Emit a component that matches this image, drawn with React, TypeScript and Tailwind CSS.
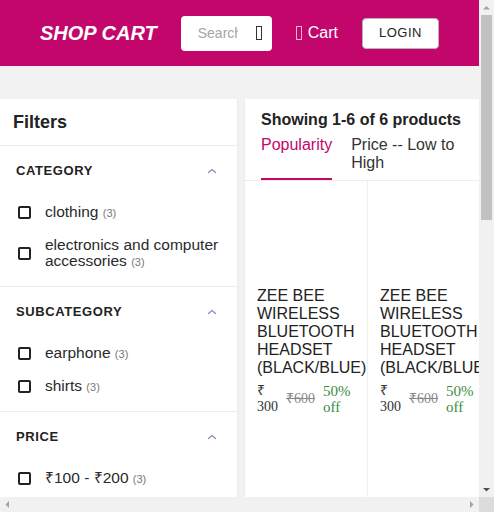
import { useState } from 'react';

interface FilterItem {
  label: string;
  count: number;
}

interface FilterGroup {
  id: string;
  title: string;
  items: FilterItem[];
}

const filterGroups: FilterGroup[] = [
  {
    id: 'category',
    title: 'Category',
    items: [
      { label: 'clothing', count: 3 },
      { label: 'electronics and computer accessories', count: 3 },
    ],
  },
  {
    id: 'subcategory',
    title: 'Subcategory',
    items: [
      { label: 'earphone', count: 3 },
      { label: 'shirts', count: 3 },
    ],
  },
  {
    id: 'price',
    title: 'Price',
    items: [
      { label: '₹100 - ₹200', count: 3 },
      { label: '₹300 - ₹400', count: 3 },
    ],
  },
];

const products = [
  { id: 1, name: 'ZEE BEE WIRELESS BLUETOOTH HEADSET (BLACK/BLUE)', price: 300, mrp: 600, off: 50 },
  { id: 2, name: 'ZEE BEE WIRELESS BLUETOOTH HEADSET (BLACK/BLUE)', price: 300, mrp: 600, off: 50 },
  { id: 3, name: 'ZEE BEE WIRELESS BLUETOOTH HEADSET (BLACK/BLUE)', price: 300, mrp: 600, off: 50 },
];

function ChevronUp() {
  return (
    <svg className="w-[12px] h-[12px] text-[#8a8cb2]" viewBox="0 0 12 12" fill="none" stroke="currentColor">
      <path d="M2.5 7.5L6 4.5l3.5 3" strokeWidth={1.2} strokeLinecap="round" strokeLinejoin="round" />
    </svg>
  );
}

// stand-in for the icon font glyph that never loaded
function Tofu({ className }: { className: string }) {
  return <span className={`inline-block w-[6px] h-[14px] border ${className}`} />;
}

function Arrow({ dir, color }: { dir: 'up' | 'down' | 'left' | 'right'; color: string }) {
  const d = {
    up: 'M1 6.5h7L4.5 3z',
    down: 'M1 3h7L4.5 6.5z',
    left: 'M6 1v7L2.5 4.5z',
    right: 'M3 1v7l3.5-3.5z',
  }[dir];
  return (
    <svg className="w-[9px] h-[9px]" viewBox="0 0 9 9">
      <path d={d} fill={color} />
    </svg>
  );
}

export default function App() {
  const [checked, setChecked] = useState<Set<string>>(new Set());
  const [tab, setTab] = useState<'popularity' | 'price'>('popularity');

  const toggle = (key: string) => {
    const next = new Set(checked);
    if (next.has(key)) next.delete(key);
    else next.add(key);
    setChecked(next);
  };

  return (
    <div className="w-screen h-screen overflow-hidden grid grid-cols-[1fr_15px] grid-rows-[1fr_15px] font-['Liberation_Sans',Arial,sans-serif]">
      <div className="overflow-hidden bg-[#f2f2f2]">
        {/* Header */}
        <header className="h-[66px] bg-[#c2066c] flex items-center justify-center gap-6">
          <h1 className="text-[20px] font-bold italic text-white">SHOP CART</h1>
          <div className="w-[91px] h-[35px] bg-white rounded flex items-center">
            <input
              placeholder="Search"
              className="ml-[17px] w-[40px] text-[14px] text-[#333] placeholder:text-[#a5a5a5] outline-none"
            />
            <Tofu className="ml-auto mr-[10px] border-[#333]" />
          </div>
          <div className="flex items-center gap-[6px] text-white text-[16px]">
            <Tofu className="border-[#f5b3d3]" />
            <span>Cart</span>
          </div>
          <button className="w-[77px] h-[31px] bg-white border border-[#b5b5b5] rounded text-[13px] tracking-[0.5px] text-[#222]">
            LOGIN
          </button>
        </header>

        <main className="flex items-start gap-2 pt-[33px]">
          {/* Filters */}
          <aside className="w-[237px] shrink-0 bg-white shadow-[0_1px_2px_rgba(0,0,0,0.08)]">
            <div className="h-[47px] flex items-center px-[13px] border-b border-[#ececec]">
              <h2 className="text-[18px] font-bold text-[#222]">Filters</h2>
            </div>
            {filterGroups.map((group) => (
              <div key={group.id} className="px-4 pt-4 pb-2 border-b border-[#ececec]">
                <div className="h-[18px] flex items-center justify-between pr-[3px]">
                  <span className="text-[13px] font-bold uppercase tracking-[0.6px] text-[#222]">{group.title}</span>
                  <ChevronUp />
                </div>
                <div className="mt-4">
                  {group.items.map((item) => {
                    const key = group.id + item.label;
                    return (
                      <label key={key} className="flex items-center gap-[14px] py-2 pl-[2px] cursor-pointer">
                        <input
                          type="checkbox"
                          checked={checked.has(key)}
                          onChange={() => toggle(key)}
                          className="appearance-none shrink-0 w-[13px] h-[13px] border-2 border-[#222] rounded-[2px]"
                        />
                        <span className="text-[15.5px] leading-4 text-[#2a2a2a]">
                          {item.label} <span className="text-[11px] text-[#777]">({item.count})</span>
                        </span>
                      </label>
                    );
                  })}
                </div>
              </div>
            ))}
          </aside>

          {/* Products */}
          <section className="flex-1 min-w-0 overflow-hidden bg-white shadow-[0_1px_2px_rgba(0,0,0,0.08)]">
            <div className="px-4 pt-[11px] border-b border-[#ececec]">
              <p className="text-[16px] font-bold text-[#222] leading-[20px]">Showing 1-6 of 6 products</p>
              <div className="flex items-stretch gap-[19px] mt-[6px]">
                <button
                  onClick={() => setTab('popularity')}
                  className={`flex items-start text-left text-[16px] leading-[18px] pb-[6px] border-b-2 ${
                    tab === 'popularity' ? 'text-[#c2066c] border-[#c2066c]' : 'text-[#333] border-transparent'
                  }`}
                >
                  Popularity
                </button>
                <button
                  onClick={() => setTab('price')}
                  className={`flex items-start text-left text-[16px] leading-[18px] pb-[6px] border-b-2 ${
                    tab === 'price' ? 'text-[#c2066c] border-[#c2066c]' : 'text-[#333] border-transparent'
                  }`}
                >
                  Price -- Low to High
                </button>
              </div>
            </div>
            <div className="grid grid-cols-[123px_123px_123px]">
              {products.map((p) => (
                <div key={p.id} className="p-3 h-[330px] border-r border-[#efefef]">
                  <div className="h-[94px]" />
                  <p className="text-[16px] leading-[18px] text-[#222] uppercase">{p.name}</p>
                  <div className="flex items-center gap-2 mt-[6px] font-['Liberation_Serif',serif] text-[14px] leading-4">
                    <span className="w-min text-[#333]">₹ {p.price}</span>
                    <span className="line-through text-[#888]">₹{p.mrp}</span>
                    <span className="w-min text-[15px] text-[#388e3c]">{p.off}% off</span>
                  </div>
                </div>
              ))}
            </div>
          </section>
        </main>
      </div>

      {/* vertical scrollbar */}
      <div className="bg-[#f1f1f1] flex flex-col items-center">
        <div className="h-[15px] flex items-center justify-center">
          <Arrow dir="up" color="#a3a3a3" />
        </div>
        <div className="flex-1 w-full flex justify-center">
          <div className="w-[11px] h-[205px] bg-[#c1c1c1]" />
        </div>
        <div className="h-[15px] flex items-center justify-center">
          <Arrow dir="down" color="#505050" />
        </div>
      </div>

      {/* horizontal scrollbar */}
      <div className="bg-[#f1f1f1] flex items-center justify-between">
        <div className="w-[15px] flex justify-center">
          <Arrow dir="left" color="#a3a3a3" />
        </div>
        <div className="w-[15px] flex justify-center">
          <Arrow dir="right" color="#a3a3a3" />
        </div>
      </div>
      <div className="bg-[#dcdcdc]" />
    </div>
  );
}
